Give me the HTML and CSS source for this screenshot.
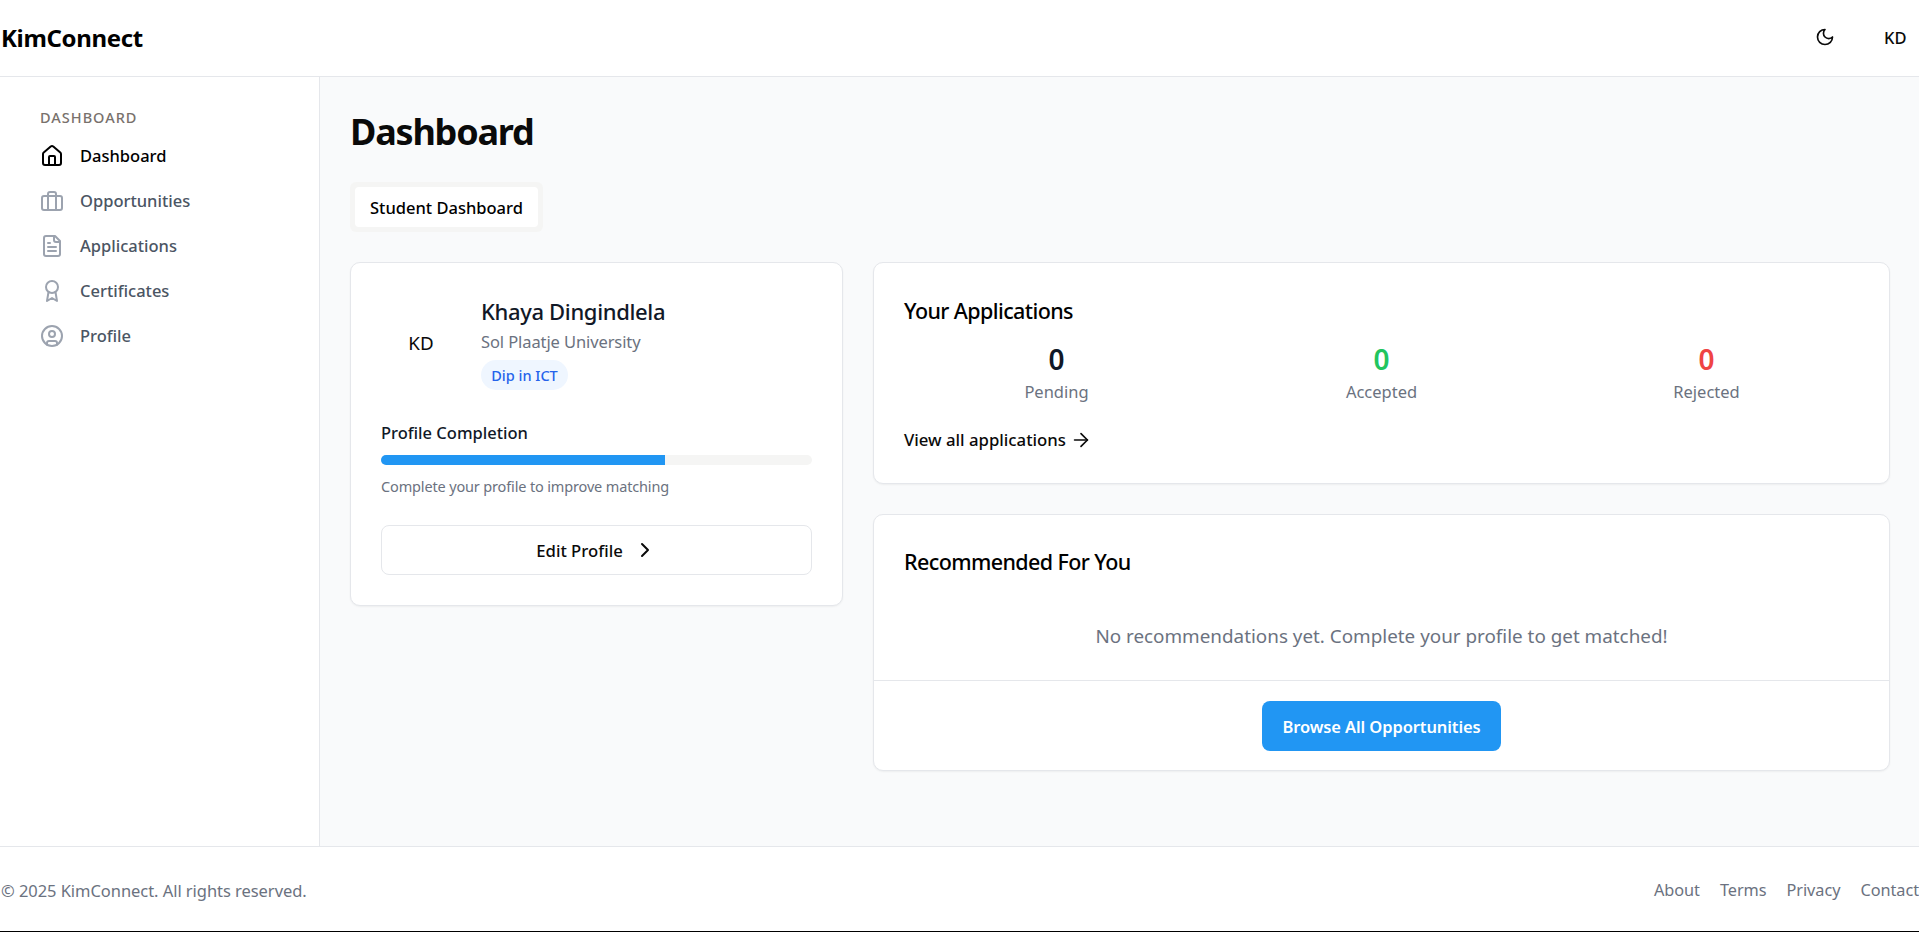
FILE: index.html
```html
<!DOCTYPE html>
<html lang="en">
<head>
    <meta charset="UTF-8">
    <title>KimConnect</title>
    <link rel="stylesheet" href="styles.css">
</head>
<body>
    <div class="app">
        <header class="topbar">
            <span class="brand">KimConnect</span>
            <div class="topbar-right">
                <svg class="icon icon-moon" viewBox="0 0 24 24"><path d="M12 3a6 6 0 0 0 9 9 9 9 0 1 1-9-9Z"/></svg>
                <span class="user-initials">KD</span>
            </div>
        </header>
        <div class="middle">
            <aside class="sidebar">
                <div class="side-label">DASHBOARD</div>
                <a class="side-item active" href="#">
                    <svg class="icon" viewBox="0 0 24 24"><path d="M15 21v-8a1 1 0 0 0-1-1h-4a1 1 0 0 0-1 1v8"/><path d="M3 10a2 2 0 0 1 .709-1.528l7-5.999a2 2 0 0 1 2.582 0l7 5.999A2 2 0 0 1 21 10v9a2 2 0 0 1-2 2H5a2 2 0 0 1-2-2z"/></svg>
                    Dashboard
                </a>
                <a class="side-item" href="#">
                    <svg class="icon" viewBox="0 0 24 24"><rect x="2" y="7" width="20" height="14" rx="2"/><path d="M16 21V5a2 2 0 0 0-2-2h-4a2 2 0 0 0-2 2v16"/></svg>
                    Opportunities
                </a>
                <a class="side-item" href="#">
                    <svg class="icon" viewBox="0 0 24 24"><path d="M15 2H6a2 2 0 0 0-2 2v16a2 2 0 0 0 2 2h12a2 2 0 0 0 2-2V7Z"/><path d="M14 2v4a2 2 0 0 0 2 2h4"/><path d="M10 9H8"/><path d="M16 13H8"/><path d="M16 17H8"/></svg>
                    Applications
                </a>
                <a class="side-item" href="#">
                    <svg class="icon" viewBox="0 0 24 24"><circle cx="12" cy="8" r="6"/><path d="M15.477 12.89 17 22l-5-3-5 3 1.523-9.11"/></svg>
                    Certificates
                </a>
                <a class="side-item" href="#">
                    <svg class="icon" viewBox="0 0 24 24"><circle cx="12" cy="12" r="10"/><circle cx="12" cy="10" r="3"/><path d="M7 20.662V19a2 2 0 0 1 2-2h6a2 2 0 0 1 2 2v1.662"/></svg>
                    Profile
                </a>
            </aside>
            <main class="main">
                <h1 class="page-title">Dashboard</h1>
                <div class="tabs">
                    <span class="tab">Student Dashboard</span>
                </div>
                <div class="columns">
                    <section class="card profile-card">
                        <div class="profile-head">
                            <div class="avatar">KD</div>
                            <div class="profile-info">
                                <div class="profile-name">Khaya Dingindlela</div>
                                <div class="profile-school">Sol Plaatje University</div>
                                <span class="badge">Dip in ICT</span>
                            </div>
                        </div>
                        <div class="completion-label">Profile Completion</div>
                        <div class="progress"><div class="progress-fill" style="width: 66%"></div></div>
                        <div class="completion-hint">Complete your profile to improve matching</div>
                        <a class="outline-btn" href="#">
                            Edit Profile
                            <svg class="icon" viewBox="0 0 24 24"><path d="m9 18 6-6-6-6"/></svg>
                        </a>
                    </section>
                    <div class="right-col">
                        <section class="card apps-card">
                            <h2 class="card-title">Your Applications</h2>
                            <div class="stats">
                                <div class="stat">
                                    <div class="stat-num">0</div>
                                    <div class="stat-label">Pending</div>
                                </div>
                                <div class="stat">
                                    <div class="stat-num green">0</div>
                                    <div class="stat-label">Accepted</div>
                                </div>
                                <div class="stat">
                                    <div class="stat-num red">0</div>
                                    <div class="stat-label">Rejected</div>
                                </div>
                            </div>
                            <a class="view-all" href="#">
                                View all applications
                                <svg class="icon icon-arrow" viewBox="0 0 24 24"><path d="M5 12h14"/><path d="m12 5 7 7-7 7"/></svg>
                            </a>
                        </section>
                        <section class="card rec-card">
                            <div class="rec-body">
                                <h2 class="card-title">Recommended For You</h2>
                                <p class="rec-empty">No recommendations yet. Complete your profile to get matched!</p>
                            </div>
                            <div class="rec-foot">
                                <a class="primary-btn" href="#">Browse All Opportunities</a>
                            </div>
                        </section>
                    </div>
                </div>
            </main>
        </div>
        <footer class="footer">
            <span>&copy; 2025 KimConnect. All rights reserved.</span>
            <nav class="footer-links">
                <a href="#">About</a>
                <a href="#">Terms</a>
                <a href="#">Privacy</a>
                <a href="#">Contact</a>
            </nav>
        </footer>
    </div>
</body>
</html>
```

FILE: styles.css
```css
* {
    box-sizing: border-box;
    margin: 0;
    padding: 0;
}
html, body {
    height: 932px;
    overflow: hidden;
    background: #000;
}
body {
    font-family: "Noto Sans", "Open Sans", sans-serif;
    font-size: 16.5px;
    color: #0a0a0a;
}
a {
    color: inherit;
    text-decoration: none;
}
.icon {
    width: 24px;
    height: 24px;
    fill: none;
    stroke: currentColor;
    stroke-width: 2;
    stroke-linecap: round;
    stroke-linejoin: round;
    flex-shrink: 0;
}
.app {
    height: 931px;
    display: flex;
    flex-direction: column;
    background: #fff;
}

/* top bar */
.topbar {
    height: 77px;
    flex-shrink: 0;
    display: flex;
    align-items: center;
    justify-content: space-between;
    padding-left: 1px;
    padding-bottom: 2px;
    border-bottom: 1px solid #e5e7eb;
}
.brand {
    font-size: 24px;
    font-weight: 700;
    color: #000;
    letter-spacing: -0.35px;
}
.topbar-right {
    display: flex;
    align-items: center;
    gap: 49px;
    color: #0a0a0a;
}
.icon-moon {
    width: 20px;
    height: 20px;
}
.user-initials {
    width: 35px;
    font-weight: 500;
}

/* middle */
.middle {
    flex: 1;
    display: flex;
    min-height: 0;
}
.sidebar {
    width: 320px;
    flex-shrink: 0;
    padding: 30px 40px 0;
    border-right: 1px solid #e5e7eb;
}
.side-label {
    font-size: 14.5px;
    line-height: 20px;
    font-weight: 500;
    color: #78716c;
    letter-spacing: 1px;
    margin-bottom: 6px;
}
.side-item {
    display: flex;
    align-items: center;
    gap: 16px;
    height: 45px;
    font-weight: 500;
    color: #4b5563;
}
.side-item .icon {
    color: #9ca3af;
}
.side-item.active,
.side-item.active .icon {
    color: #000;
}

.main {
    flex: 1;
    min-width: 0;
    padding: 31px 29px 0 30px;
    background: #f9fafb;
}
.page-title {
    font-size: 36px;
    line-height: 48px;
    font-weight: 700;
    color: #0a0a0a;
    letter-spacing: -1.2px;
    margin-bottom: 26px;
}
.tabs {
    display: inline-flex;
    padding: 5px;
    border-radius: 6px;
    background: #f5f5f4;
    margin-bottom: 30px;
    vertical-align: top;
}
.tab {
    display: block;
    width: 183px;
    height: 40px;
    line-height: 42px;
    text-align: center;
    font-weight: 500;
    color: #000;
    background: #fff;
    border-radius: 4px;
}
.columns {
    display: grid;
    grid-template-columns: 493px 1fr;
    gap: 30px;
    align-items: start;
}
.right-col {
    display: flex;
    flex-direction: column;
    gap: 30px;
}
.card {
    background: #fff;
    border: 1px solid #e5e7eb;
    border-radius: 10px;
    box-shadow: 0 1px 2px rgba(0, 0, 0, 0.05);
}

/* profile */
.profile-card {
    height: 344px;
    padding: 33px 30px 0;
}
.profile-head {
    display: flex;
    align-items: center;
    gap: 20px;
    margin-bottom: 31px;
}
.avatar {
    width: 80px;
    height: 80px;
    line-height: 80px;
    text-align: center;
    font-size: 18.8px;
}
.profile-name {
    font-size: 22px;
    line-height: 30px;
    font-weight: 500;
    color: #111827;
    letter-spacing: -0.35px;
}
.profile-school {
    line-height: 24px;
    color: #6b7280;
    letter-spacing: -0.1px;
    margin-top: 4px;
    margin-bottom: 6px;
}
.badge {
    display: block;
    width: 87px;
    height: 30px;
    line-height: 30px;
    text-align: center;
    border-radius: 15px;
    font-size: 14.5px;
    font-weight: 500;
    color: #2563eb;
    background: #eff6ff;
}
.completion-label {
    line-height: 24px;
    font-weight: 500;
    color: #111827;
    margin-bottom: 10px;
}
.progress {
    height: 10px;
    border-radius: 5px;
    background: #f5f5f4;
    overflow: hidden;
}
.progress-fill {
    height: 100%;
    background: #2196f3;
}
.completion-hint {
    font-size: 14.5px;
    line-height: 20px;
    color: #6b7280;
    letter-spacing: -0.15px;
    margin-top: 11px;
    margin-bottom: 29px;
}
.outline-btn {
    display: flex;
    align-items: center;
    justify-content: center;
    gap: 10px;
    height: 50px;
    border: 1px solid #e5e7eb;
    border-radius: 8px;
    font-weight: 500;
    font-size: 16.7px;
    color: #0a0a0a;
}

/* applications */
.card-title {
    font-size: 21.5px;
    line-height: 30px;
    font-weight: 500;
    color: #000;
    letter-spacing: -0.6px;
}
.apps-card {
    height: 222px;
    padding: 33px 30px 0;
}
.stats {
    display: grid;
    grid-template-columns: repeat(3, 1fr);
    gap: 20px;
    margin-top: 15px;
}
.stat {
    text-align: center;
}
.stat-num {
    font-size: 28px;
    line-height: 36px;
    font-weight: 600;
    color: #111827;
}
.stat-num.green {
    color: #22c55e;
}
.stat-num.red {
    color: #ef4444;
}
.stat-label {
    line-height: 24px;
    color: #6b7280;
    margin-top: 3px;
}
.view-all {
    display: inline-flex;
    align-items: center;
    gap: 4px;
    font-size: 16.75px;
    font-weight: 500;
    line-height: 24px;
    margin-top: 24px;
}
.icon-arrow {
    width: 22px;
    height: 22px;
    stroke-width: 1.8;
}

/* recommended */
.rec-card {
    height: 257px;
}
.rec-body {
    height: 166px;
    padding: 32px 30px 0;
    border-bottom: 1px solid #e5e7eb;
}
.rec-empty {
    margin-top: 46px;
    font-size: 18.85px;
    line-height: 27px;
    text-align: center;
    color: #6b7280;
}
.rec-foot {
    display: flex;
    justify-content: center;
    padding-top: 20px;
}
.primary-btn {
    display: block;
    width: 239px;
    height: 50px;
    line-height: 52px;
    text-align: center;
    border-radius: 8px;
    background: #2196f3;
    color: #fff;
    font-weight: 600;
    letter-spacing: -0.1px;
}

/* footer */
.footer {
    height: 85px;
    flex-shrink: 0;
    display: flex;
    align-items: center;
    justify-content: space-between;
    padding-left: 1px;
    padding-top: 2px;
    border-top: 1px solid #e5e7eb;
    color: #6b7280;
    letter-spacing: -0.05px;
}
.footer-links {
    display: flex;
    gap: 20px;
    font-size: 16.3px;
    white-space: nowrap;
}
```
